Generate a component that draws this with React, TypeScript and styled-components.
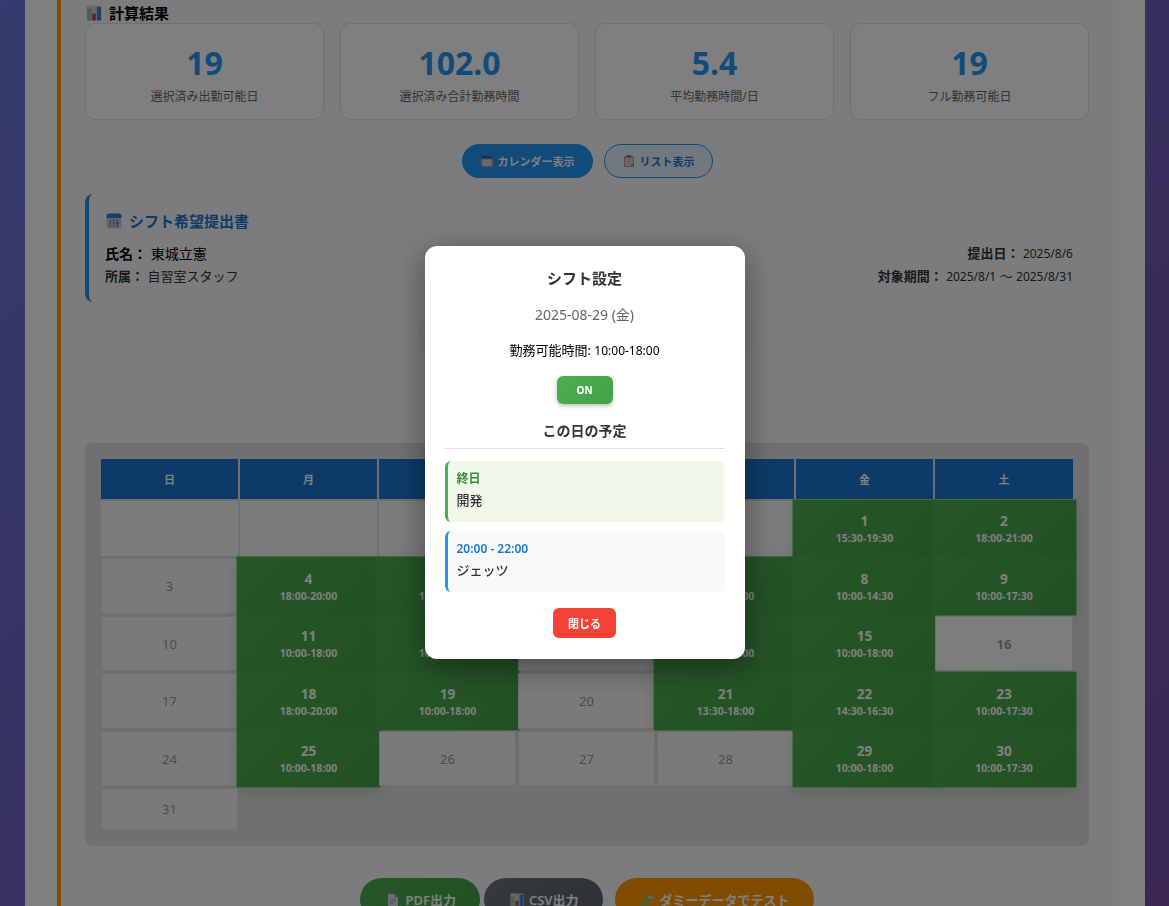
import React from "react";
import styled, { createGlobalStyle, css } from "styled-components";

const GlobalStyle = createGlobalStyle`
  *, *::before, *::after { box-sizing: border-box; }
  body {
    margin: 0;
    overflow: hidden;
    font-family: "Noto Sans", "Noto Sans CJK JP", sans-serif;
    background: linear-gradient(135deg, #6a76dc 0%, #764ba2 100%);
    color: #000;
  }
  h2, h3, h4, p { margin: 0; }
  button { font-family: inherit; cursor: pointer; }
`;

const Page = styled.div`
  padding: 0 24px 0 25px;
`;

const Container = styled.main`
  background: #fff;
  padding: 0 32px 32px;
`;

const Results = styled.section`
  background: #f8f9fa;
  border-left: 4px solid #ff9800;
  padding: 3px 24px 24px;
`;

const SectionTitle = styled.h2`
  display: flex;
  align-items: center;
  gap: 7px;
  padding-left: 1px;
  font-size: 15px;
  line-height: 20px;
`;

const Stats = styled.div`
  display: grid;
  grid-template-columns: repeat(4, 1fr);
  gap: 16px;
`;

const StatCard = styled.div`
  background: #fff;
  border: 1px solid #e0e0e0;
  border-radius: 10px;
  padding: 16px 16px 11px;
  text-align: center;
`;

const StatValue = styled.div`
  color: #2196f3;
  font-size: 32px;
  font-weight: 700;
  line-height: 46px;
`;

const StatLabel = styled.div`
  color: #666;
  font-size: 12px;
  line-height: 22px;
`;

const ViewSwitch = styled.div`
  display: flex;
  justify-content: center;
  gap: 11px;
  margin-top: 24px;
`;

const ViewButton = styled.button<{ $active?: boolean }>`
  display: flex;
  align-items: center;
  gap: 5px;
  height: 34px;
  padding: 0 17px 0 18px;
  border: 1px solid #2196f3;
  border-radius: 20px;
  background: ${(p) => (p.$active ? "#2196f3" : "#e3f2fd")};
  color: ${(p) => (p.$active ? "#fff" : "#1976d2")};
  font-size: 11px;
  font-weight: 600;
`;

const RequestHeader = styled.header`
  margin-top: 16px;
  padding: 16px 16px 14px;
  border-left: 4px solid #2196f3;
  border-radius: 8px;
`;

const RequestTitle = styled.h3`
  display: flex;
  align-items: center;
  gap: 7px;
  margin-bottom: 10px;
  padding-left: 1px;
  color: #1976d2;
  font-size: 15px;
  line-height: 22px;
`;

const RequestInfo = styled.div`
  display: flex;
  justify-content: space-between;
`;

const InfoColumn = styled.div<{ $end?: boolean }>`
  text-align: ${(p) => (p.$end ? "right" : "left")};
`;

const InfoLine = styled.p<{ $strong?: boolean }>`
  color: ${(p) => (p.$strong ? "#000" : "#333")};
  font-size: ${(p) => (p.$strong ? "14px" : "13px")};
  line-height: 23px;
`;

const Digits = styled.span`
  font-size: 12px;
`;

const MonthBar = styled.div`
  width: 334px;
  height: 34px;
  margin: 16px auto 91px;
  border-radius: 17px;
  background: #f5f5f5;
  box-shadow: 0 0 1px rgba(0, 0, 0, 0.3);
`;

const CalendarPanel = styled.div`
  padding: 14px;
  border-radius: 8px;
  background: #e0e0e0;
`;

const Calendar = styled.table`
  width: 100%;
  table-layout: fixed;
  border-collapse: separate;
  border-spacing: 2px;
  tbody tr { height: 55px; }
  tbody tr:nth-child(even) { height: 56px; }
  tbody tr:last-child { height: 42px; }
`;

const WeekHead = styled.th`
  height: 40px;
  padding: 0;
  background: #1976d2;
  color: #fff;
  font-size: 11px;
  font-weight: 700;
  &:last-child { width: 138px; }
`;

const Day = styled.td<{ $kind: Kind }>`
  position: relative;
  padding: 0;
  text-align: center;
  font-size: 13px;
  line-height: 18px;
  color: #999;
  ${(p) => p.$kind === "empty" && css`background: #f8f9fa;`}
  ${(p) =>
    (p.$kind === "off" || p.$kind === "free") &&
    css`
      background: ${p.$kind === "free" ? "#fafafa" : "#f5f5f5"};
      border: 1px solid #e0e0e0;
    `}
  ${(p) => p.$kind === "free" && css`font-weight: 700;`}
  ${(p) =>
    p.$kind === "on" &&
    css`
      background: linear-gradient(135deg, #4caf50, #45a049);
      color: #fff;
      font-weight: 700;
      transform: scale(1.05);
      box-shadow: 0 4px 12px rgba(76, 175, 80, 0.3);
    `}
`;

const DayTime = styled.div`
  font-size: 10px;
  line-height: 15px;
`;

const Actions = styled.div`
  display: flex;
  justify-content: center;
  gap: 4px;
  margin-top: 32px;
`;

const ActionButton = styled.button<{ $tone: "green" | "gray" | "orange" }>`
  display: flex;
  align-items: center;
  gap: 5px;
  height: 43px;
  padding: 0 24px 0 26px;
  border: 0;
  border-radius: 22px;
  background: ${(p) =>
    ({
      green: "linear-gradient(135deg, #4caf50, #45a049)",
      gray: "linear-gradient(135deg, #6c757d, #5a6268)",
      orange: "#ff9800",
    })[p.$tone]};
  margin-left: ${(p) => (p.$tone === "orange" ? "8px" : "0")};
  color: #fff;
  font-size: 13px;
  font-weight: 600;
`;

const Overlay = styled.div`
  position: fixed;
  inset: 0;
  z-index: 10;
  display: flex;
  align-items: center;
  justify-content: center;
  padding-bottom: 2px;
  background: rgba(0, 0, 0, 0.5);
`;

const Dialog = styled.div`
  width: 320px;
  padding: 20px 20px 21px;
  border-radius: 12px;
  background: #fff;
  box-shadow: 0 8px 32px rgba(0, 0, 0, 0.4);
  text-align: center;
`;

const DialogTitle = styled.h3`
  color: #333;
  font-size: 15px;
  line-height: 24px;
`;

const DialogDate = styled.p`
  margin-top: 14px;
  color: #666;
  font-size: 14px;
  line-height: 22px;
`;

const DialogHours = styled.p`
  margin-top: 14px;
  font-size: 13px;
  line-height: 20px;
`;

const ToggleButton = styled.button`
  display: block;
  width: 56px;
  height: 28px;
  margin: 15px auto 0;
  padding: 0;
  border: 0;
  border-radius: 6px;
  background: linear-gradient(135deg, #4caf50, #45a049);
  box-shadow: 0 2px 4px rgba(0, 0, 0, 0.25);
  color: #fff;
  font-size: 10px;
  font-weight: 700;
`;

const PlansTitle = styled.h4`
  margin: 16px 0 12px;
  padding-bottom: 6px;
  border-bottom: 1px solid #e0e0e0;
  color: #333;
  font-size: 14px;
  line-height: 22px;
`;

const Plan = styled.div<{ $allDay?: boolean }>`
  margin-bottom: 9px;
  padding: 8px 9px 11px;
  border-left: 3px solid ${(p) => (p.$allDay ? "#4caf50" : "#2196f3")};
  border-radius: 6px;
  background: ${(p) => (p.$allDay ? "#f1f8e9" : "#f8f9fa")};
  color: #333;
  font-size: 13px;
  font-weight: 500;
  line-height: 22px;
  text-align: left;
`;

const PlanTime = styled.div<{ $allDay?: boolean }>`
  color: ${(p) => (p.$allDay ? "#388e3c" : "#1976d2")};
  font-size: 12px;
  font-weight: 600;
  line-height: 20px;
`;

const CloseButton = styled.button`
  display: block;
  height: 30px;
  margin: 16px auto 0;
  padding: 0 15px;
  border: 0;
  border-radius: 6px;
  background: #f44336;
  color: #fff;
  font-size: 11px;
  font-weight: 700;
`;

const ChartIcon = ({ size = 16 }: { size?: number }) => (
  <svg width={size} height={size} viewBox="0 0 16 16" aria-hidden="true">
    <rect x="0.5" y="0.5" width="15" height="15" rx="1.5" fill="#d6d0da" />
    <path d="M5.5 1v14M10.5 1v14M1 5.5h14M1 10.5h14" stroke="#bdb6c4" strokeWidth="0.6" />
    <rect x="1.2" y="3.8" width="4" height="11.7" rx="0.5" fill="#8fc987" />
    <rect x="6.2" y="8.5" width="3.6" height="7" rx="0.5" fill="#cf3f7c" />
    <rect x="11" y="2" width="4" height="13.5" rx="0.5" fill="#3a82c4" />
  </svg>
);

const CalendarIcon = ({ size = 16, warm = false }: { size?: number; warm?: boolean }) => (
  <svg width={size} height={size} viewBox="0 0 16 16" aria-hidden="true">
    <rect x="0.5" y="1" width="15" height="14.5" rx="2.5" fill={warm ? "#d9b3bd" : "#cfc4df"} />
    <path d="M0.5 5V3A2.5 2.5 0 0 1 3 0.5h10A2.5 2.5 0 0 1 15.5 3v2z" fill={warm ? "#2069c4" : "#2a7fd6"} />
    <path
      d="M6.8 6.8h1.8v1.8H6.8zM10.300 6.800h1.800v1.800h-1.800zM3.300 9.400h1.800v1.800H3.300zM6.800 9.400h1.800v1.800H6.800zM3.300 12h1.800v1.800H3.300zM6.800 12h1.800v1.800H6.800zM10.300 12h1.800v1.800h-1.800zM3.300 6.800h1.800v1.800H3.300z"
      fill={warm ? "#f6e8f0" : "#8d7ba8"}
    />
    <path d="M10.300 9.200h2.200v2.200h-2.200z" fill={warm ? "#f6e8f0" : "#1d78d8"} />
  </svg>
);

const ClipboardIcon = () => (
  <svg width="12" height="12" viewBox="0 0 12 12" aria-hidden="true">
    <rect x="1" y="1" width="10" height="11" rx="1" fill="#c98e72" />
    <path d="M2.200 2.400h7.600v6.400L7.700 11H2.200z" fill="#e0d4e2" />
    <path d="M9.800 8.800H7.700V11z" fill="#b9a9c6" />
    <rect x="3.800" y="0.200" width="4.400" height="2.400" rx="0.800" fill="#6d6675" />
    <path d="M3.500 5h5M3.500 6.800h5M3.500 8.600h3" stroke="#b9adc4" strokeWidth="0.700" />
  </svg>
);

const PageIcon = () => (
  <svg width="14" height="14" viewBox="0 0 14 14" aria-hidden="true">
    <path d="M3 1h5.500L12 4.500V13a1 1 0 0 1-1 1H3a1 1 0 0 1-1-1V2a1 1 0 0 1 1-1z" fill="#dcd3e6" />
    <path d="M8.500 1v2.500a1 1 0 0 0 1 1H12z" fill="#a898ba" />
    <path d="M4 6.500h6M4 8.500h6M4 10.500h4" stroke="#a79bb5" strokeWidth="0.800" />
  </svg>
);

const TestTubeIcon = () => (
  <svg width="14" height="14" viewBox="0 0 14 14" aria-hidden="true">
    <path d="M8.800 2.200l3.200 3.200-7.500 7.300a2.200 2.200 0 0 1-3.200-3.200z" fill="#b9dfe9" />
    <path d="M6.500 4.500l4.600 1.700-6.600 6.500a2.200 2.200 0 0 1-3.200-3.200z" fill="#7cc964" />
    <path d="M8.300 1.100l4.700 4.700" stroke="#8cc4da" strokeWidth="1.500" strokeLinecap="round" />
  </svg>
);

type Kind = "on" | "off" | "free" | "empty";
type Cell = { day?: number; time?: string; kind: Kind };

const SHIFTS: Record<number, string> = {
  1: "15:30-19:30", 2: "18:00-21:00", 4: "18:00-20:00", 5: "10:00-18:00",
  7: "10:00-18:00", 8: "10:00-14:30", 9: "10:00-17:30", 11: "10:00-18:00",
  12: "10:00-18:00", 14: "13:30-18:00", 15: "10:00-18:00", 18: "18:00-20:00",
  19: "10:00-18:00", 21: "13:30-18:00", 22: "14:30-16:30", 23: "10:00-17:30",
  25: "10:00-18:00", 29: "10:00-18:00", 30: "10:00-17:30",
};

const FIRST_WEEKDAY = 5;
const DAYS = 31;

const cellFor = (day: number): Cell => {
  if (day < 1) return { kind: "empty" };
  if (SHIFTS[day]) return { day, time: SHIFTS[day], kind: "on" };
  return { day, kind: day === 16 ? "free" : "off" };
};

const WEEKS: Cell[][] = Array.from({ length: 6 }, (_, week) =>
  Array.from({ length: 7 }, (_, i) => week * 7 + i - FIRST_WEEKDAY + 1)
    .filter((day) => day <= DAYS)
    .map(cellFor)
);

const STATS = [
  ["19", "選択済み出勤可能日"],
  ["102.0", "選択済み合計勤務時間"],
  ["5.4", "平均勤務時間/日"],
  ["19", "フル勤務可能日"],
];

export default function App() {
  return (
    <>
      <GlobalStyle />
      <Page>
        <Container>
          <Results>
            <SectionTitle><ChartIcon />計算結果</SectionTitle>
            <Stats>
              {STATS.map(([value, label]) => (
                <StatCard key={label}>
                  <StatValue>{value}</StatValue>
                  <StatLabel>{label}</StatLabel>
                </StatCard>
              ))}
            </Stats>
            <ViewSwitch>
              <ViewButton $active><CalendarIcon size={12} warm />カレンダー表示</ViewButton>
              <ViewButton><ClipboardIcon />リスト表示</ViewButton>
            </ViewSwitch>
            <RequestHeader>
              <RequestTitle><CalendarIcon />シフト希望提出書</RequestTitle>
              <RequestInfo>
                <InfoColumn>
                  <InfoLine $strong><strong>氏名：</strong> 東城立憲</InfoLine>
                  <InfoLine><strong>所属：</strong> 自習室スタッフ</InfoLine>
                </InfoColumn>
                <InfoColumn $end>
                  <InfoLine><strong>提出日：</strong> <Digits>2025/8/6</Digits></InfoLine>
                  <InfoLine>
                    <strong>対象期間：</strong> <Digits>2025/8/1</Digits> ～ <Digits>2025/8/31</Digits>
                  </InfoLine>
                </InfoColumn>
              </RequestInfo>
            </RequestHeader>
            <MonthBar />
            <CalendarPanel>
              <Calendar>
                <thead>
                  <tr>
                    {["日", "月", "火", "水", "木", "金", "土"].map((d) => (
                      <WeekHead key={d} scope="col">{d}</WeekHead>
                    ))}
                  </tr>
                </thead>
                <tbody>
                  {WEEKS.map((week, w) => (
                    <tr key={w}>
                      {week.map((cell, i) => (
                        <Day key={i} $kind={cell.kind}>
                          {cell.day}
                          {cell.time && <DayTime>{cell.time}</DayTime>}
                        </Day>
                      ))}
                    </tr>
                  ))}
                </tbody>
              </Calendar>
            </CalendarPanel>
            <Actions>
              <ActionButton $tone="green"><PageIcon />PDF出力</ActionButton>
              <ActionButton $tone="gray"><ChartIcon size={14} />CSV出力</ActionButton>
              <ActionButton $tone="orange"><TestTubeIcon />ダミーデータでテスト</ActionButton>
            </Actions>
          </Results>
        </Container>
      </Page>
      <Overlay>
        <Dialog role="dialog" aria-modal="true" aria-labelledby="shift-dialog-title">
          <DialogTitle id="shift-dialog-title">シフト設定</DialogTitle>
          <DialogDate>2025-08-29 (金)</DialogDate>
          <DialogHours>勤務可能時間: <Digits>10:00-18:00</Digits></DialogHours>
          <ToggleButton aria-pressed="true">ON</ToggleButton>
          <PlansTitle>この日の予定</PlansTitle>
          <Plan $allDay>
            <PlanTime $allDay>終日</PlanTime>
            開発
          </Plan>
          <Plan>
            <PlanTime>20:00 - 22:00</PlanTime>
            ジェッツ
          </Plan>
          <CloseButton>閉じる</CloseButton>
        </Dialog>
      </Overlay>
    </>
  );
}
